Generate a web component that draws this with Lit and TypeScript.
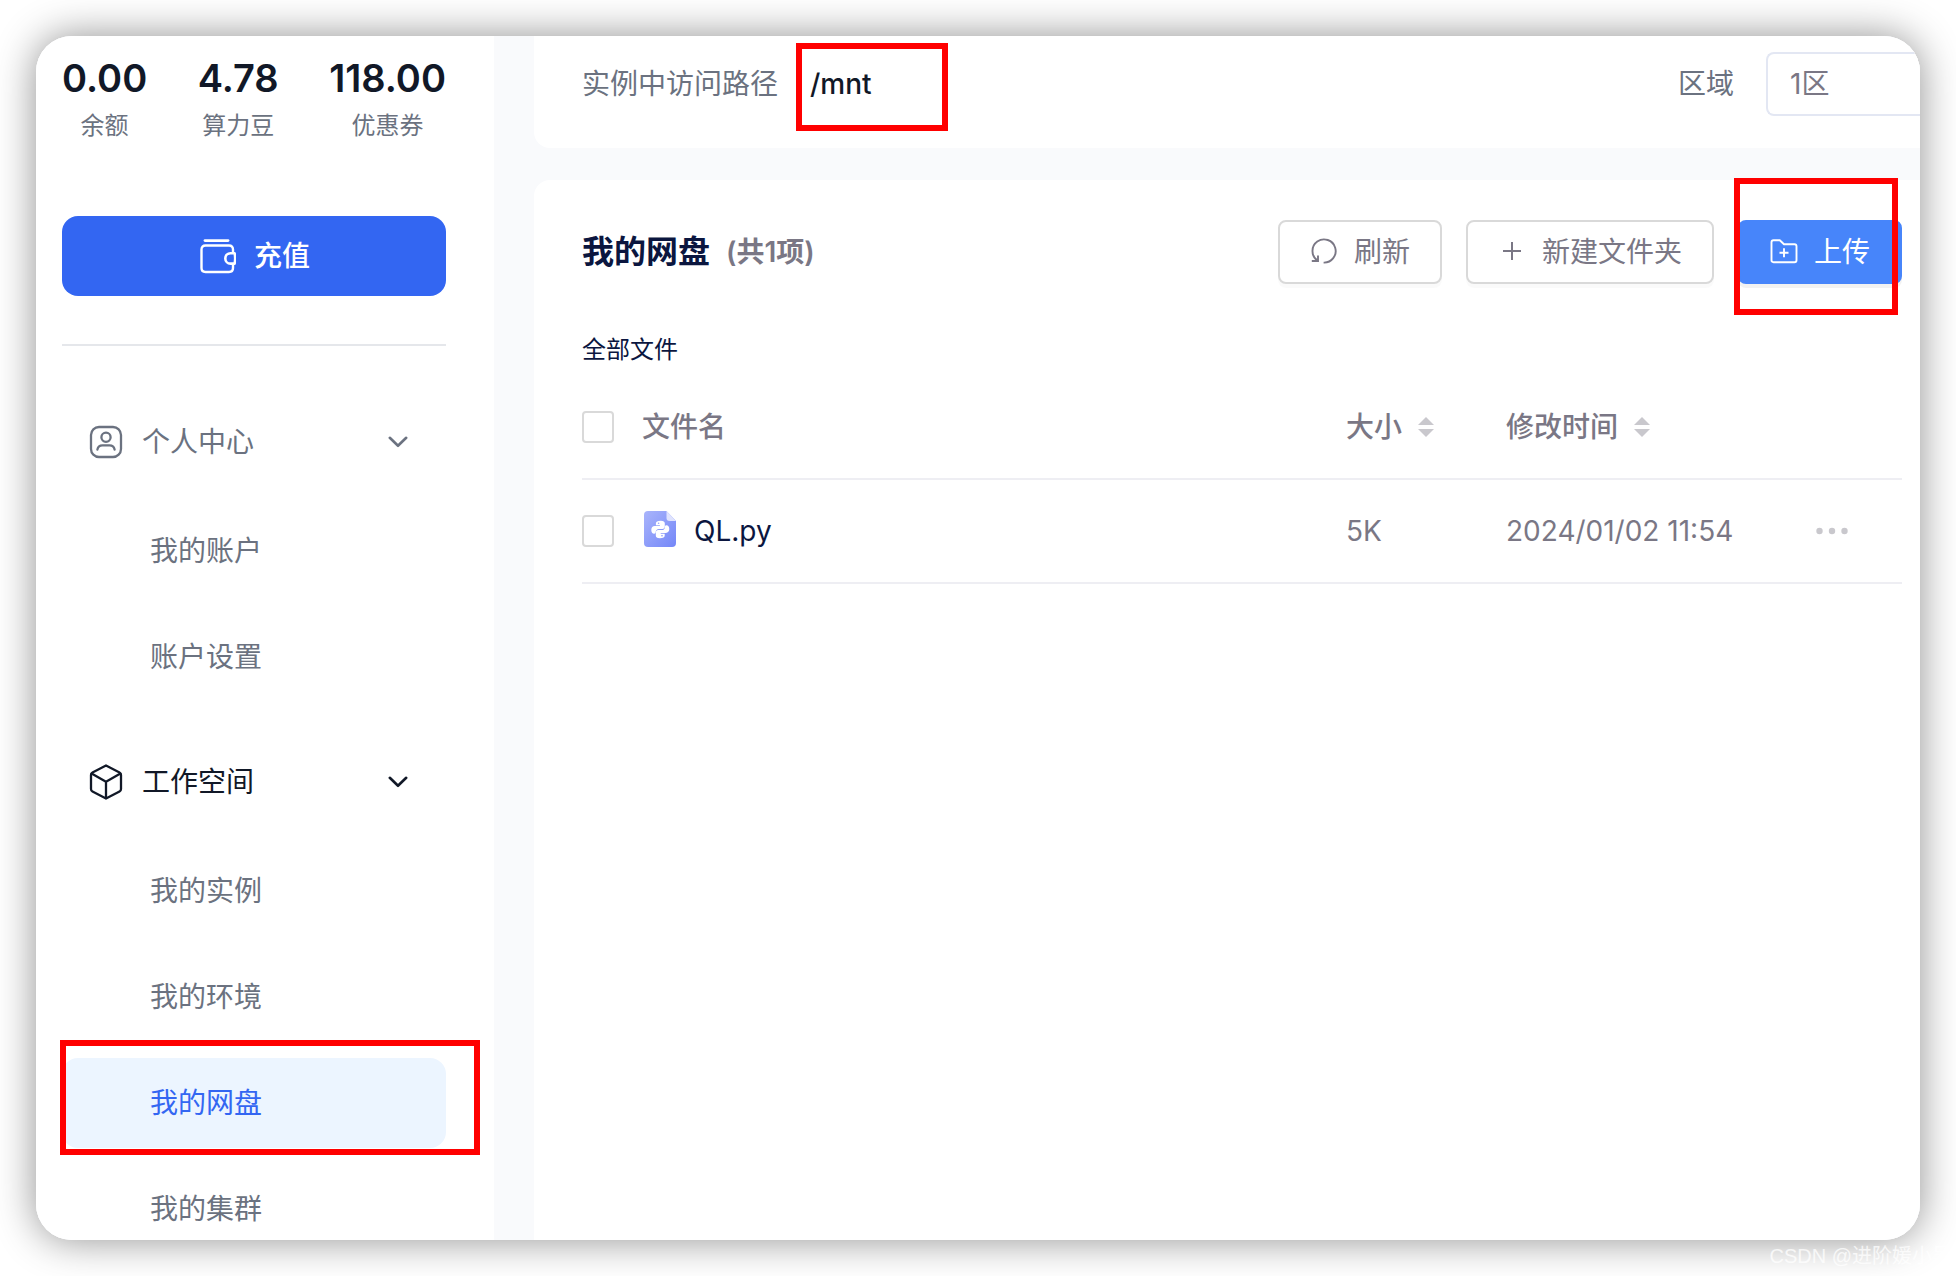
import { LitElement, html, css } from "lit";
import { customElement } from "lit/decorators.js";

const chevron = html`<svg class="chevron" width="20" height="12" viewBox="0 0 20 12" fill="none" stroke="currentColor" stroke-width="2.6" stroke-linecap="round" stroke-linejoin="round" aria-hidden="true"><path d="M1.8 1.8 10 9.8 18.2 1.8" /></svg>`;

const userIcon = html`<svg width="36" height="36" viewBox="0 0 36 36" fill="none" stroke="currentColor" stroke-width="2.3" stroke-linecap="round" aria-hidden="true"><rect x="3" y="3" width="30" height="30" rx="8" /><circle cx="18" cy="13.2" r="4.6" /><path d="M9.4 25.6c.8-3.600 3.400-4.200 5-4.200h7.200c1.600 0 4.200.6 5 4.200" /></svg>`;

const cubeIcon = html`<svg width="36" height="36" viewBox="0 0 36 36" fill="none" stroke="currentColor" stroke-width="2.3" stroke-linejoin="round" stroke-linecap="round" aria-hidden="true"><path d="M18 1.4 31.5 8.400Q33 9.200 33 11v14Q33 26.800 31.500 27.600L18 34.600 4.500 27.600Q3 26.800 3 25V11Q3 9.200 4.500 8.400Z" /><path d="M3.600 9.600 18 17.800 32.400 9.600M18 17.800V34" /></svg>`;

const walletIcon = html`<svg width="36" height="36" viewBox="0 0 36 36" fill="none" stroke="currentColor" stroke-width="2.4" stroke-linecap="round" stroke-linejoin="round" aria-hidden="true"><path d="M5 2.600H28" stroke-width="2.8" /><path d="M33 14.500V11.500q0-4-4-4H5.500q-4 0-4 4V30q0 4 4 4H29q4 0 4-4V26.500" /><path d="M34.600 15.200H30.500a5.200 5.200 0 0 0 0 10.400H34.600Q35.800 20.400 34.600 15.200Z" stroke-width="2.6" /></svg>`;

const refreshIcon = html`<svg width="28" height="28" viewBox="0 0 28 28" fill="none" stroke="currentColor" stroke-width="1.9" aria-hidden="true"><path d="M13.600 24.600A11.600 11.600 0 1 0 7.400 22.500" /><path d="M1.800 23H8V17.500" /></svg>`;

const plusIcon = html`<svg width="28" height="28" viewBox="0 0 28 28" fill="none" stroke="currentColor" stroke-width="2" aria-hidden="true"><path d="M5 13H23M14 4V22" /></svg>`;

const uploadIcon = html`<svg width="28" height="28" viewBox="0 0 28 28" fill="none" stroke="currentColor" stroke-width="1.900" stroke-linejoin="round" aria-hidden="true"><path d="M1.500 4.200q0-2 2-2H9.800l4.200 4H24.500q2 0 2 2V22.200q0 2-2 2H3.500q-2 0-2-2Z" /><path d="M14 10.200v9M9.500 14.700h9" /></svg>`;

const fileIcon = html`<svg width="32" height="36" viewBox="0 0 32 36" aria-hidden="true">
  <defs><linearGradient id="page" x1="0" y1="0" x2="1" y2="1"><stop offset="0" stop-color="#a9b4fb" /><stop offset="1" stop-color="#7487f8" /></linearGradient></defs>
  <path d="M4 0H22.500L32 10V32a4 4 0 0 1-4 4H4a4 4 0 0 1-4-4V4a4 4 0 0 1 4-4Z" fill="url(#page)" />
  <path d="M22.500 0 32 10H25.500a3 3 0 0 1-3-3Z" fill="#dfe3fe" />
  <path d="M16.800 9.800c-3.400 0-4.900 1-4.900 2.700v1.700h4v.9h-5.200c-2 0-3.400 1.600-3.400 3.900 0 2.200 1.100 3.700 2.900 3.700.9 0 1.500-.6 1.500-1.600 0-1.900 1.300-3.200 3-3.200h3.700c1.400 0 2.400-1 2.400-2.400v-2.900c0-1.800-1.300-2.800-4-2.800Z" fill="#fff" />
  <path d="M15.800 27.200c3.400 0 4.900-1 4.900-2.700v-1.700h-4v-.9h5.200c2 0 3.400-1.600 3.400-3.900 0-2.200-1.100-3.700-2.900-3.700-.9 0-1.500.6-1.500 1.600 0 1.900-1.300 3.200-3 3.200h-3.700c-1.400 0-2.400 1-2.400 2.400v2.900c0 1.800 1.300 2.800 4 2.800Z" fill="#fff" />
  <circle cx="14.600" cy="12.200" r=".8" fill="#97a4fa" />
  <circle cx="18" cy="24.800" r=".8" fill="#8595f9" />
</svg>`;

const sortIcon = html`<svg width="16" height="20" viewBox="0 0 16 20" fill="currentColor" aria-hidden="true"><path d="M8 0 16 8H0Z" /><path d="M8 20 0 12H16Z" /></svg>`;

const moreIcon = html`<svg width="32" height="8" viewBox="0 0 32 8" fill="currentColor" aria-hidden="true"><circle cx="3.500" cy="4" r="3.200" /><circle cx="16" cy="4" r="3.200" /><circle cx="28.500" cy="4" r="3.200" /></svg>`;

const stats = [
  { value: "0.00", label: "余额" },
  { value: "4.78", label: "算力豆" },
  { value: "118.00", label: "优惠券" },
];

const groups = [
  { title: "个人中心", icon: userIcon, current: false, items: ["我的账户", "账户设置"] },
  { title: "工作空间", icon: cubeIcon, current: true, items: ["我的实例", "我的环境", "我的网盘", "我的集群"] },
];

const activeItem = "我的网盘";

const files = [{ name: "QL.py", size: "5K", modified: "2024/01/02 11:54" }];

@customElement("app-root")
export class AppRoot extends LitElement {
  static styles = css`
    :host {
      display: block;
      box-sizing: border-box;
      height: 100vh;
      padding: 36px;
      position: relative;
      overflow: hidden;
      background: #fff;
      color: #6b7280;
      font-family: Inter, "Noto Sans CJK SC", sans-serif;
      font-size: 28px;
      line-height: 40px;
    }
    * { box-sizing: border-box; }
    svg { display: block; flex: none; }
    button, select, input { font: inherit; color: inherit; margin: 0; }
    button { cursor: pointer; }
    a { color: inherit; text-decoration: none; }
    .window {
      display: flex;
      height: 100%;
      border-radius: 36px;
      overflow: hidden;
      background: #f9fafc;
    }
    .shadow {
      height: 100%;
      border-radius: 36px;
      box-shadow: 0 0 40px rgba(0, 0, 0, 0.44);
    }
    .sidebar {
      flex: none;
      width: 458px;
      padding: 18px 48px 0 26px;
      background: #fff;
    }
    .stats { display: flex; justify-content: space-between; margin: 0; }
    .stat { display: flex; flex-direction: column-reverse; align-items: center; }
    .stat dt { font-size: 24px; line-height: 48px; }
    .stat dd { margin: 0; font-size: 38px; line-height: 48px; font-weight: 600; color: #111827; }
    .recharge {
      display: flex;
      align-items: center;
      justify-content: center;
      gap: 18px;
      width: 100%;
      height: 80px;
      margin-top: 66px;
      padding: 0 0 0 2px;
      border: 0;
      border-radius: 16px;
      background: #3366f2;
      color: #fff;
      font-weight: 500;
    }
    .rule { height: 2px; margin: 48px 0 52px; border: 0; background: #e5e7eb; }
    .group { margin-bottom: 36px; }
    .group-head {
      display: flex;
      align-items: center;
      gap: 18px;
      width: 100%;
      height: 88px;
      padding: 0 38px 0 26px;
      border: 0;
      background: none;
      text-align: left;
    }
    .group-head.current { color: #111827; }
    .chevron { margin-left: auto; }
    .menu {
      display: flex;
      flex-direction: column;
      gap: 16px;
      margin: 20px 0 0;
      padding: 0;
      list-style: none;
    }
    .item {
      display: flex;
      align-items: center;
      height: 90px;
      padding-left: 88px;
      border-radius: 16px;
    }
    .item.active { background: #ecf5ff; color: #3366f2; }
    .main {
      flex: 1;
      min-width: 0;
      display: flex;
      flex-direction: column;
      gap: 32px;
      padding-left: 40px;
    }
    .path-card {
      display: flex;
      align-items: center;
      height: 112px;
      padding: 0 0 16px 48px;
      border-bottom-left-radius: 16px;
      background: #fff;
    }
    .path { margin-left: 32px; color: #111827; font-weight: 500; }
    .region { display: flex; align-items: center; gap: 32px; margin-left: auto; }
    .region-select {
      appearance: none;
      width: 154px;
      height: 64px;
      padding: 0 22px;
      border: 2px solid #e3e7f3;
      border-right: 0;
      border-radius: 8px 0 0 8px;
      background: #fff;
      color: #7a7785;
    }
    .files-card {
      flex: 1;
      padding: 40px 18px 0 48px;
      border-top-left-radius: 16px;
      background: #fff;
      color: #7a7785;
    }
    .toolbar { display: flex; align-items: center; gap: 24px; }
    .title {
      flex: 1;
      display: flex;
      align-items: center;
      gap: 16px;
      margin: 0;
      font-size: 32px;
      font-weight: 600;
      color: #0b163f;
    }
    .count { font-size: 28px; color: #7a7785; }
    .btn {
      display: flex;
      align-items: center;
      gap: 16px;
      height: 64px;
      padding: 0 30px;
      border: 2px solid #d9d9d9;
      border-radius: 8px;
      background: #fff;
      box-shadow: 0 4px 0 rgba(0, 0, 0, 0.02);
    }
    .btn.primary {
      border-color: #4785fa;
      background: #4785fa;
      color: #fff;
      box-shadow: 0 4px 0 rgba(0, 0, 0, 0.05);
    }
    .crumb { margin: 46px 0 6px; font-size: 24px; color: #0b163f; }
    .files { width: 100%; table-layout: fixed; border-collapse: separate; border-spacing: 0; }
    .files th, .files td {
      height: 104px;
      padding: 0;
      border-bottom: 2px solid #eeeef3;
      text-align: left;
      font-weight: 400;
    }
    .files th { font-weight: 500; }
    .col-check { width: 60px; }
    .col-size { width: 160px; }
    .col-time { width: 310px; }
    .col-more { width: 86px; }
    .check {
      display: block;
      appearance: none;
      width: 32px;
      height: 32px;
      border: 2px solid #d9d9d9;
      border-radius: 4px;
      background: #fff;
    }
    .sort {
      display: flex;
      align-items: center;
      gap: 16px;
      padding: 0;
      border: 0;
      background: none;
    }
    .sort svg { color: #c9c8cd; }
    .file { display: flex; align-items: flex-start; gap: 18px; padding-left: 2px; color: #0b163f; }
    .more { display: block; padding: 0; border: 0; background: none; color: #c9c8cd; }
    .mark { position: absolute; border: 6px solid #f00; pointer-events: none; }
    .mark-path { left: 796px; top: 43px; width: 152px; height: 88px; }
    .mark-upload { right: 58px; top: 178px; width: 164px; height: 137px; }
    .mark-drive { left: 60px; top: 1040px; width: 420px; height: 115px; }
    .watermark {
      position: absolute;
      right: 4px;
      bottom: 6px;
      font-family: "Liberation Sans", "Noto Sans CJK SC", sans-serif;
      font-size: 20px;
      line-height: 28px;
      white-space: nowrap;
      color: rgba(255, 255, 255, 0.75);
    }
  `;

  render() {
    return html`
      <div class="shadow">
        <div class="window">
          <aside class="sidebar">
            <dl class="stats">
              ${stats.map((s) => html`<div class="stat"><dt>${s.label}</dt><dd>${s.value}</dd></div>`)}
            </dl>
            <button class="recharge" type="button">${walletIcon}<span>充值</span></button>
            <hr class="rule" />
            <nav>
              ${groups.map(
                (g) => html`<section class="group">
                  <button class="group-head ${g.current ? "current" : ""}" type="button" aria-expanded="true">
                    ${g.icon}<span>${g.title}</span>${chevron}
                  </button>
                  <ul class="menu">
                    ${g.items.map(
                      (item) => html`<li><a class="item ${item === activeItem ? "active" : ""}" href="#">${item}</a></li>`
                    )}
                  </ul>
                </section>`
              )}
            </nav>
          </aside>
          <main class="main">
            <section class="path-card">
              <span>实例中访问路径</span>
              <span class="path">/mnt</span>
              <div class="region">
                <label for="region">区域</label>
                <select class="region-select" id="region"><option>1区</option></select>
              </div>
            </section>
            <section class="files-card">
              <div class="toolbar">
                <h1 class="title">我的网盘<span class="count">(共1项)</span></h1>
                <button class="btn" type="button">${refreshIcon}<span>刷新</span></button>
                <button class="btn" type="button">${plusIcon}<span>新建文件夹</span></button>
                <button class="btn primary" type="button">${uploadIcon}<span>上传</span></button>
              </div>
              <p class="crumb">全部文件</p>
              <table class="files">
                <colgroup><col class="col-check" /><col /><col class="col-size" /><col class="col-time" /><col class="col-more" /></colgroup>
                <thead>
                  <tr>
                    <th><input class="check" type="checkbox" aria-label="全选" /></th>
                    <th>文件名</th>
                    <th><button class="sort" type="button">大小${sortIcon}</button></th>
                    <th><button class="sort" type="button">修改时间${sortIcon}</button></th>
                    <th></th>
                  </tr>
                </thead>
                <tbody>
                  ${files.map(
                    (f) => html`<tr>
                      <td><input class="check" type="checkbox" aria-label=${f.name} /></td>
                      <td><div class="file">${fileIcon}<span>${f.name}</span></div></td>
                      <td>${f.size}</td>
                      <td>${f.modified}</td>
                      <td><button class="more" type="button" aria-label="更多">${moreIcon}</button></td>
                    </tr>`
                  )}
                </tbody>
              </table>
            </section>
          </main>
        </div>
      </div>
      <div class="mark mark-path"></div>
      <div class="mark mark-upload"></div>
      <div class="mark mark-drive"></div>
      <div class="watermark">CSDN @进阶媛小吴</div>
    `;
  }
}
